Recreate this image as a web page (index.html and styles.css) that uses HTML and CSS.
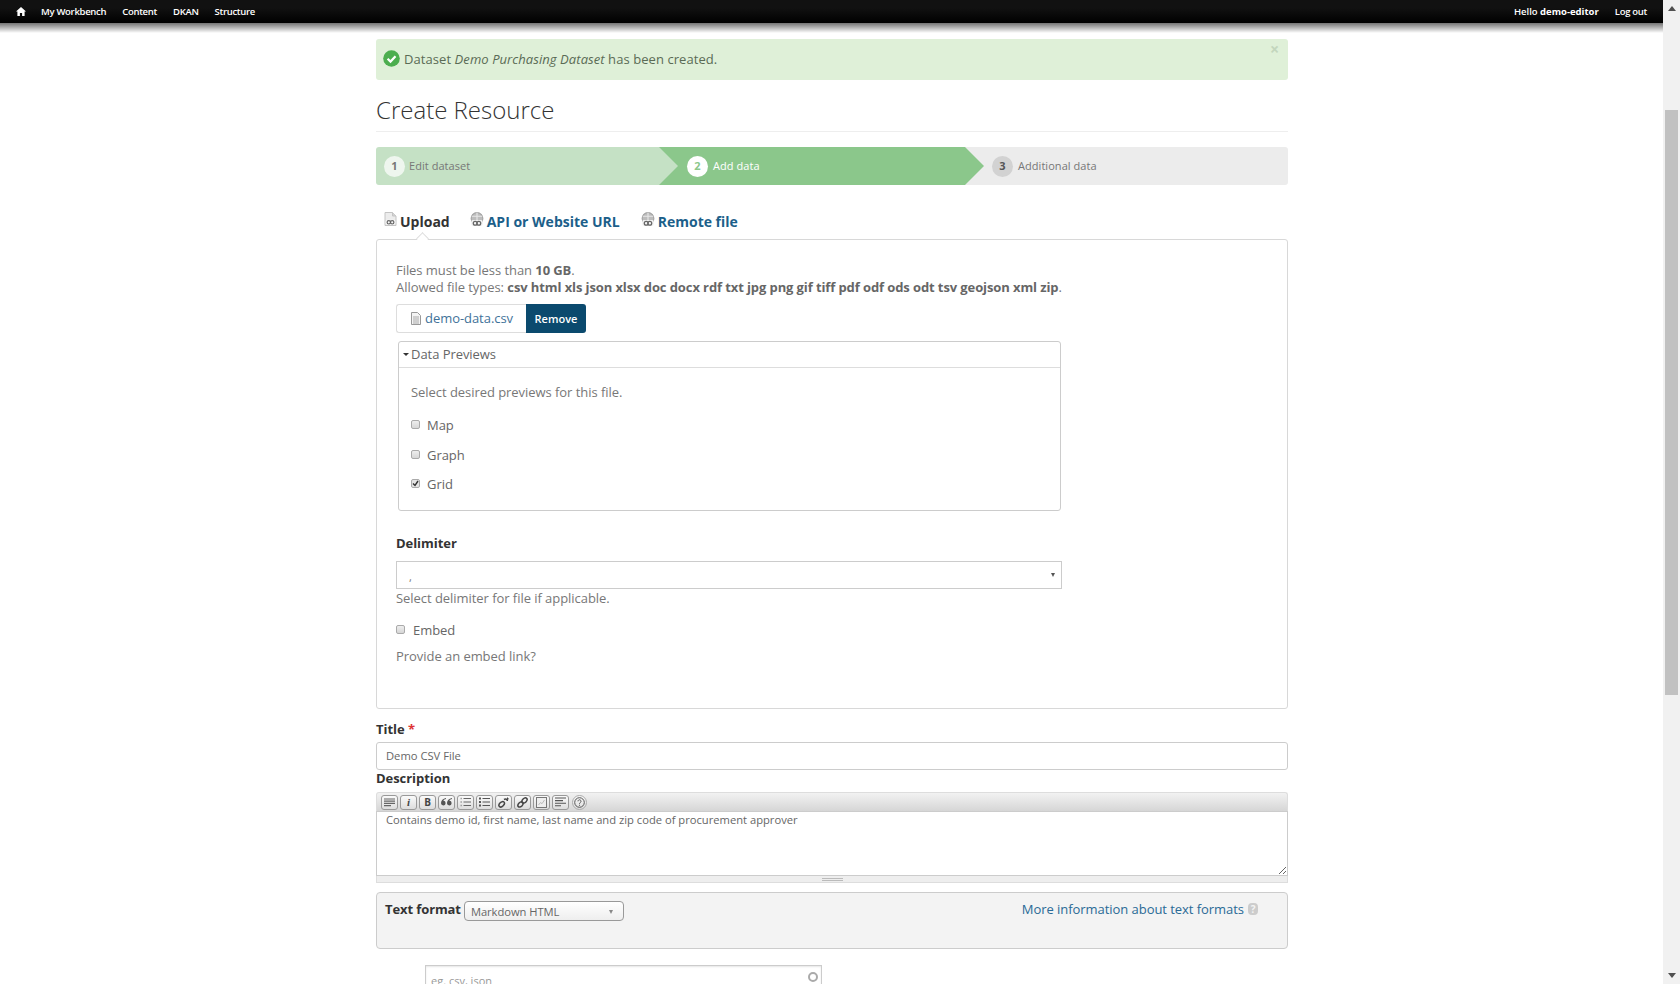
FILE: index.html
```html
<!DOCTYPE html>
<html lang="en">
<head>
    <meta charset="UTF-8">
    <title>Create Resource | DKAN</title>
    <link rel="stylesheet" href="styles.css">
</head>
<body>
<div class="window">
    <div class="viewport">
        <nav class="topbar">
            <a class="home" href="#"><svg width="10" height="9" viewBox="0 0 10 9"><path d="M5 0L0 4.6h1.4V9h2.5V5.9h2.2V9h2.5V4.6H10z" fill="#fff"/></svg></a>
            <a href="#">My Workbench</a>
            <a href="#">Content</a>
            <a href="#">DKAN</a>
            <a href="#">Structure</a>
            <span class="user">Hello <b>demo-editor</b></span>
            <a class="logout" href="#">Log out</a>
        </nav>

        <main class="page">
            <div class="alert">
                <svg class="alert-icon" width="17" height="17" viewBox="0 0 17 17"><circle cx="8.5" cy="8.5" r="8.3" fill="#4cae4f"/><path d="M4.6 8.8l2.9 2.8 5-5.4" fill="none" stroke="#fff" stroke-width="2.2"/></svg>
                <span class="alert-text">Dataset <em>Demo Purchasing Dataset</em> has been created.</span>
                <span class="alert-close">×</span>
            </div>

            <h1 class="title">Create Resource</h1>

            <ol class="steps">
                <li class="step step-done"><span class="num">1</span>Edit dataset</li>
                <li class="step step-active"><span class="num">2</span>Add data</li>
                <li class="step step-todo"><span class="num">3</span>Additional data</li>
            </ol>

            <div class="tabs">
                <a class="tab tab-current" href="#">
                    <svg width="13" height="14" viewBox="0 0 13 14"><path d="M1 .5h7.5L12 4v9.5H1z" fill="#ececec" stroke="#c4c4c4"/><path d="M8.5.5V4H12" fill="#d4d4d4" stroke="#c4c4c4"/><rect x="1.5" y="7.8" width="10" height="5" rx="2" fill="#f8f8f8"/><circle cx="4.8" cy="10.3" r="1.7" fill="none" stroke="#666" stroke-width="1.2"/><circle cx="8.2" cy="10.3" r="1.7" fill="none" stroke="#666" stroke-width="1.2"/></svg>
                    Upload
                </a>
                <a class="tab tab-api" href="#">
                    <svg width="16" height="15" viewBox="0 0 15 14"><circle cx="7.5" cy="6" r="5.5" fill="#bdbdbd" stroke="#a0a0a0"/><path d="M2.5 4h10M2.5 8h10M7.5 .5v11" stroke="#e8e8e8"/><rect x="2" y="7.8" width="11" height="5.4" rx="2.4" fill="#f4f4f4"/><circle cx="5.8" cy="10.5" r="1.8" fill="none" stroke="#666" stroke-width="1.2"/><circle cx="9.2" cy="10.5" r="1.8" fill="none" stroke="#666" stroke-width="1.2"/></svg>
                    API or Website URL
                </a>
                <a class="tab tab-remote" href="#">
                    <svg width="16" height="15" viewBox="0 0 15 14"><circle cx="7.5" cy="6" r="5.5" fill="#bdbdbd" stroke="#a0a0a0"/><path d="M2.5 4h10M2.5 8h10M7.5 .5v11" stroke="#e8e8e8"/><rect x="2" y="7.8" width="11" height="5.4" rx="2.4" fill="#f4f4f4"/><circle cx="5.8" cy="10.5" r="1.8" fill="none" stroke="#666" stroke-width="1.2"/><circle cx="9.2" cy="10.5" r="1.8" fill="none" stroke="#666" stroke-width="1.2"/></svg>
                    Remote file
                </a>
            </div>

            <section class="panel">
                <p class="help help-files">Files must be less than <strong>10 GB</strong>.<br>Allowed file types: <strong>csv html xls json xlsx doc docx rdf txt jpg png gif tiff pdf odf ods odt tsv geojson xml zip</strong>.</p>

                <div class="file-row">
                    <span class="file-name">
                        <svg width="10" height="13" viewBox="0 0 10 13"><path d="M.5.5h6l3 3v9h-9z" fill="#f4f4f4" stroke="#999"/><path d="M2 5h6M2 7h6M2 9h6M2 11h6" stroke="#aaa"/></svg>
                        <a href="#">demo-data.csv</a>
                    </span>
                    <button class="remove" type="button">Remove</button>
                </div>

                <fieldset class="previews">
                    <div class="previews-head"><span class="caret"></span>Data Previews</div>
                    <div class="previews-body">
                        <p class="previews-note">Select desired previews for this file.</p>
                        <label class="check check-map"><input type="checkbox">Map</label>
                        <label class="check check-graph"><input type="checkbox">Graph</label>
                        <label class="check check-grid"><input type="checkbox" checked>Grid</label>
                    </div>
                </fieldset>

                <div class="field-label delimiter-label">Delimiter</div>
                <div class="delimiter">
                    <span class="delimiter-value">,</span>
                    <span class="delimiter-caret"></span>
                </div>
                <p class="help delimiter-help">Select delimiter for file if applicable.</p>
                <label class="check check-embed"><input type="checkbox">Embed</label>
                <p class="help embed-help">Provide an embed link?</p>
            </section>

            <label class="field-label title-label" for="res-title">Title <span class="req">*</span></label>
            <input class="text-input" id="res-title" type="text" value="Demo CSV File">

            <label class="field-label desc-label" for="res-desc">Description</label>
            <div class="editor">
                <div class="toolbar">
                    <button class="tool" type="button"><svg width="11" height="9" viewBox="0 0 11 9"><path d="M0 1h11M0 3.2h11M0 5.4h11M0 7.6h7" stroke="#666" stroke-width="1.2"/></svg></button>
                    <button class="tool tool-i" type="button">i</button>
                    <button class="tool tool-b" type="button">B</button>
                    <button class="tool" type="button"><svg width="11" height="8" viewBox="0 0 11 8"><path d="M5 0C2 .5 0 2.5 0 5a2.3 2.3 0 1 0 2.4-2.2C2.8 1.8 3.8 1.2 5 1zM11 0C8 .5 6 2.5 6 5a2.3 2.3 0 1 0 2.4-2.2C8.8 1.8 9.8 1.2 11 1z" fill="#555"/></svg></button>
                    <button class="tool" type="button"><svg width="11" height="10" viewBox="0 0 11 10"><path d="M3.5 1.5H11M3.5 5H11M3.5 8.5H11" stroke="#666" stroke-width="1.2"/><path d="M.5 .8h1.400v1.400H.5zM.5 4.300h1.400v1.400H.5zM.5 7.800h1.400v1.400H.5z" fill="#999"/></svg></button>
                    <button class="tool" type="button"><svg width="11" height="10" viewBox="0 0 11 10"><path d="M3.5 1.5H11M3.5 5H11M3.5 8.5H11" stroke="#555" stroke-width="1.2"/><path d="M0 .5h2v2H0zM0 4h2v2H0zM0 7.5h2v2H0z" fill="#555"/></svg></button>
                    <button class="tool" type="button"><svg width="11" height="11" viewBox="0 0 11 11"><g fill="none" stroke="#444" stroke-width="1.5"><ellipse cx="3.7" cy="7.3" rx="3.2" ry="2.1" transform="rotate(-45 3.7 7.3)"/><path d="M6 2.5a2.2 3 45 0 1 3.4 1.5"/></g><path d="M9 0l2 2-2 1z" fill="#444"/></svg></button>
                    <button class="tool" type="button"><svg width="11" height="11" viewBox="0 0 11 11"><g fill="none" stroke="#444" stroke-width="1.5"><ellipse cx="3.5" cy="7.5" rx="3" ry="2" transform="rotate(-45 3.5 7.5)"/><ellipse cx="7.5" cy="3.5" rx="3" ry="2" transform="rotate(-45 7.5 3.5)"/></g></svg></button>
                    <button class="tool" type="button"><svg width="11" height="11" viewBox="0 0 11 11"><rect x=".5" y=".5" width="10" height="10" fill="#eee" stroke="#777"/><path d="M2.5 8l2-2.5 1.5 1.2L8.500 3" fill="none" stroke="#bbb"/></svg></button>
                    <button class="tool" type="button"><svg width="11" height="10" viewBox="0 0 11 10"><path d="M0 1h11M0 3.600h8M0 6.200h11M0 8.800h6" stroke="#555" stroke-width="1.1"/></svg></button>
                    <button class="tool tool-help" type="button"><svg width="11" height="11" viewBox="0 0 11 11"><circle cx="5.5" cy="5.5" r="4.8" fill="none" stroke="#555"/><path d="M4 4.3a1.5 1.5 0 1 1 2.4 1.2c-.6.4-.9.7-.9 1.3" fill="none" stroke="#555"/><path d="M5 7.7h1v1H5z" fill="#555"/></svg></button>
                </div>
                <textarea class="editor-text" id="res-desc">Contains demo id, first name, last name and zip code of procurement approver</textarea>
                <div class="grip"><span></span></div>
            </div>

            <div class="format-box">
                <span class="field-label format-label">Text format</span>
                <div class="format-select">Markdown HTML<span class="format-caret"></span></div>
                <a class="format-link" href="#">More information about text formats</a>
                <span class="format-q">?</span>
            </div>

            <div class="autocomplete">
                <input class="auto-input" type="text" placeholder="eg. csv, json">
                <span class="throbber"></span>
            </div>
        </main>
    </div>

    <div class="scrollbar">
        <span class="arrow-up"></span>
        <span class="thumb"></span>
        <span class="arrow-down"></span>
    </div>
</div>
</body>
</html>
```

FILE: styles.css
```css
html, body {
    height: 100%;
    margin: 0;
    overflow: hidden;
}
body {
    font-family: "Open Sans", "Noto Sans", sans-serif;
    font-size: 13px;
    line-height: 16px;
    letter-spacing: -0.05px;
    color: #777;
    background-color: #fff;
}
a {
    text-decoration: none;
}
p {
    margin: 0;
}
.window {
    display: flex;
    height: 100vh;
}
.viewport {
    flex: 1;
    min-width: 0;
    overflow: hidden;
}

/* top bar */
.topbar {
    display: flex;
    align-items: center;
    position: relative;
    height: 23px;
    padding: 0 16px;
    background: linear-gradient(#111 0, #111 8px, #000 100%);
    font-size: 9.5px;
    font-weight: 600;
    letter-spacing: -0.3px;
    color: #fff;
}
.topbar::after {
    content: "";
    position: absolute;
    top: 100%;
    left: 0;
    right: 0;
    height: 10px;
    background: linear-gradient(rgba(0, 0, 0, 0.55), rgba(0, 0, 0, 0));
}
.topbar a {
    color: #fff;
    margin-right: 16px;
}
.topbar .home {
    display: flex;
    margin-right: 15px;
}
.user {
    margin-left: auto;
    margin-right: 16px;
    letter-spacing: 0;
}
.user b {
    font-weight: 700;
}
.topbar .logout {
    margin-right: 0;
}

/* main column */
.page {
    width: 912px;
    margin: 0 auto;
    padding-left: 1px;
}
.alert {
    display: flex;
    align-items: center;
    gap: 4px;
    position: relative;
    height: 41px;
    margin-top: 16px;
    padding: 0 0 2px 7px;
    border-radius: 3px;
    background-color: #dff0d8;
    color: #5a6b55;
    box-sizing: border-box;
}
.alert-text {
    letter-spacing: 0.07px;
}
.alert-icon {
    flex: none;
}
.alert-close {
    position: absolute;
    top: 2px;
    right: 9px;
    font-size: 16px;
    line-height: 16px;
    color: #c3d6bd;
    font-weight: 700;
}
.title {
    height: 51px;
    margin: 0;
    border-bottom: 1px solid #eee;
    font-size: 24px;
    font-weight: 300;
    line-height: 60px;
    letter-spacing: 0;
    color: #333;
}

/* wizard steps */
.steps {
    display: grid;
    grid-template-columns: 283px 306px 1fr;
    height: 38px;
    margin: 15px 0 0;
    padding: 0;
    list-style: none;
    border-radius: 3px;
    overflow: hidden;
    font-size: 11px;
    letter-spacing: 0.05px;
}
.step {
    display: flex;
    align-items: center;
    position: relative;
    gap: 5px;
    padding-left: 28px;
    color: #777;
}
.step::after {
    content: "";
    position: absolute;
    top: 0;
    right: -19px;
    z-index: 1;
    border-top: 19px solid transparent;
    border-bottom: 19px solid transparent;
    border-left: 19px solid transparent;
}
.num {
    display: flex;
    align-items: center;
    justify-content: center;
    width: 21px;
    height: 21px;
    border-radius: 50%;
    font-weight: 700;
}
.step-done {
    gap: 4px;
    padding-left: 8px;
    background-color: #c5e1c5;
}
.step-done::after {
    border-left-color: #c5e1c5;
}
.step-done .num {
    background-color: #eef6ee;
}
.step-active {
    background-color: #8bc78b;
    color: #fff;
}
.step-active::after {
    border-left-color: #8bc78b;
}
.step-active .num {
    background-color: #fff;
    color: #8bc78b;
}
.step-todo {
    padding-left: 27px;
    background-color: #ececec;
}
.step-todo::after {
    display: none;
}
.step-todo .num {
    background-color: #d2d2d2;
    color: #555;
}

/* tabs */
.tabs {
    display: flex;
    height: 54px;
    padding-left: 8px;
    align-items: flex-end;
}
.tab {
    display: flex;
    align-items: flex-start;
    gap: 2px;
    height: 27px;
    position: relative;
    font-size: 14px;
    font-weight: 700;
    line-height: 20px;
    letter-spacing: 0;
    color: #1c5f8a;
}
.tab svg {
    flex: none;
}
.tab-current {
    gap: 3px;
    color: #333;
}
.tab-current::after {
    content: "";
    position: absolute;
    left: 34px;
    bottom: -4px;
    width: 8px;
    height: 8px;
    background-color: #fff;
    border-left: 1px solid #ddd;
    border-top: 1px solid #ddd;
    transform: rotate(45deg);
    z-index: 1;
}
.tab-api {
    margin-left: 19px;
}
.tab-remote {
    margin-left: 20px;
}

/* resource panel */
.panel {
    height: 470px;
    padding: 22px 19px 0;
    border: 1px solid #d8d8d8;
    border-radius: 3px;
    box-sizing: border-box;
}
.help-files {
    line-height: 17px;
}
.help strong {
    color: #666;
    letter-spacing: -0.1px;
}
.file-row {
    display: flex;
    height: 29px;
    margin-top: 8px;
}
.file-name {
    display: flex;
    align-items: center;
    gap: 4px;
    width: 130px;
    padding: 0 0 1px 14px;
    border: 1px solid #ddd;
    border-right: 0;
    border-radius: 3px 0 0 3px;
    box-sizing: border-box;
}
.file-name a {
    color: #3f7299;
}
.remove {
    width: 60px;
    padding: 0;
    border: 0;
    border-radius: 0 3px 3px 0;
    background-color: #0b4a6e;
    color: #fff;
    font-family: inherit;
    font-size: 11px;
    font-weight: 600;
}
.previews {
    width: 663px;
    height: 170px;
    margin: 8px 0 0 2px;
    padding: 0;
    border: 1px solid #ccc;
    border-radius: 3px;
    box-sizing: border-box;
}
.previews-head {
    display: flex;
    align-items: center;
    gap: 2px;
    height: 23px;
    padding: 0 0 2px 4px;
    border-bottom: 1px solid #ddd;
    color: #666;
}
.caret {
    width: 0;
    height: 0;
    margin-top: 2px;
    border-top: 3px solid #333;
    border-left: 3px solid transparent;
    border-right: 3px solid transparent;
}
.previews-body {
    padding: 16px 12px 0;
}
.check {
    display: flex;
    align-items: center;
    gap: 7px;
    color: #666;
}
.check input {
    appearance: none;
    width: 7px;
    height: 7px;
    margin: 0 0 1px;
    border: 1px solid #aaa;
    border-radius: 2px;
    background: linear-gradient(#eee, #d6d6d6);
    box-sizing: content-box;
}
.check input:checked {
    background: url("data:image/svg+xml,%3Csvg xmlns='http://www.w3.org/2000/svg' width='7' height='7'%3E%3Cpath d='M1 3.5l2 2 3-4.5' fill='none' stroke='%23333' stroke-width='1.4'/%3E%3C/svg%3E") no-repeat center, #e4e4e4;
}
.check-map {
    margin-top: 17px;
}
.check-graph {
    margin-top: 14px;
}
.check-grid {
    margin-top: 13px;
}
.field-label {
    display: block;
    font-weight: 700;
    color: #333;
}
.delimiter-label {
    margin-top: 24px;
}
.delimiter {
    display: flex;
    align-items: center;
    justify-content: space-between;
    width: 666px;
    height: 28px;
    margin-top: 10px;
    padding: 0 6px 0 12px;
    border: 1px solid #ccc;
    box-sizing: border-box;
}
.delimiter-value {
    padding-top: 3px;
    font-size: 11px;
}
.delimiter-caret {
    border-top: 4px solid #555;
    border-left: 2.5px solid transparent;
    border-right: 2.5px solid transparent;
}
.delimiter-help {
    margin-top: 1px;
}
.check-embed {
    gap: 8px;
    margin-top: 16px;
}
.embed-help {
    margin-top: 10px;
}

/* title and description */
.title-label {
    margin-top: 12px;
}
.req {
    color: #d33;
}
.text-input {
    display: block;
    width: 100%;
    height: 28px;
    margin: 5px 0 0;
    padding: 0 9px 2px;
    border: 1px solid #ccc;
    border-radius: 3px;
    box-sizing: border-box;
    font-family: inherit;
    font-size: 11.2px;
    color: #666;
}
.desc-label {
    margin-top: 0;
}
.editor {
    margin-top: 6px;
}
.toolbar {
    display: flex;
    align-items: center;
    gap: 2px;
    height: 19px;
    padding-left: 4px;
    border: 1px solid #ddd;
    border-bottom: 0;
    border-radius: 3px 3px 0 0;
    background: linear-gradient(#f2f2f2, #d6d6d6);
    box-sizing: border-box;
}
.tool {
    display: flex;
    align-items: center;
    justify-content: center;
    width: 17px;
    height: 15px;
    padding: 0;
    border: 1px solid #999;
    border-radius: 3px;
    background: linear-gradient(#fafafa, #ddd);
    font-family: "Liberation Serif", serif;
    font-size: 11px;
    color: #444;
}
.tool-i {
    font-style: italic;
    font-weight: 700;
}
.tool-b {
    font-family: "Open Sans", sans-serif;
    font-weight: 700;
    font-size: 10px;
}
.tool-help {
    border-radius: 50%;
    width: 15px;
    margin-left: 1px;
    border-color: #aaa;
}
.editor-text {
    display: block;
    width: 100%;
    height: 65px;
    margin: 0;
    padding: 0 9px;
    border: 1px solid #ccc;
    box-sizing: border-box;
    font-family: inherit;
    font-size: 11.2px;
    line-height: 16px;
    color: #666;
    outline: 0;
}
.grip {
    display: flex;
    justify-content: center;
    height: 7px;
    border: 1px solid #ddd;
    border-top: 0;
    background-color: #eee;
    box-sizing: border-box;
}
.grip span {
    width: 21px;
    height: 3px;
    margin-top: 2px;
    border-top: 1px solid #bbb;
    border-bottom: 1px solid #bbb;
    box-sizing: border-box;
}

/* text format */
.format-box {
    display: flex;
    align-items: flex-start;
    height: 57px;
    margin-top: 9px;
    padding: 8px 29px 0 8px;
    border: 1px solid #ccc;
    border-radius: 4px;
    background-color: #f3f3f3;
    box-sizing: border-box;
}
.format-label {
    letter-spacing: -0.1px;
}
.format-select {
    display: flex;
    align-items: center;
    justify-content: space-between;
    width: 160px;
    height: 20px;
    margin-left: 3px;
    padding: 1px 10px 0 6px;
    border: 1px solid #999;
    border-radius: 4px;
    background: linear-gradient(#fff, #eee);
    box-sizing: border-box;
    font-size: 11.2px;
    color: #666;
}
.format-caret {
    border-top: 4px solid #888;
    border-left: 2.5px solid transparent;
    border-right: 2.5px solid transparent;
}
.format-link {
    margin-left: auto;
    color: #2a6a96;
}
.format-q {
    display: flex;
    align-items: center;
    justify-content: center;
    width: 10px;
    height: 12px;
    margin: 2px 0 0 4px;
    border-radius: 4px;
    background-color: #ccc;
    color: #f3f3f3;
    font-size: 10px;
    font-weight: 700;
}

/* autocomplete */
.autocomplete {
    position: relative;
    width: 397px;
    margin: 16px 0 0 49px;
}
.auto-input {
    display: block;
    width: 100%;
    height: 30px;
    margin: 0;
    padding: 0 5px;
    border: 1px solid #ccc;
    box-shadow: inset 0 1px 2px rgba(0, 0, 0, 0.1);
    box-sizing: border-box;
    font-family: inherit;
    font-size: 11px;
}
.auto-input::placeholder {
    color: #999;
}
.throbber {
    position: absolute;
    top: 7px;
    right: 4px;
    width: 6px;
    height: 6px;
    border: 2px solid #aaa;
    border-radius: 50%;
}

/* page scrollbar */
.scrollbar {
    display: flex;
    flex-direction: column;
    align-items: center;
    flex: none;
    width: 17px;
    background-color: #f1f1f1;
}
.arrow-up {
    margin-top: 6px;
    border-bottom: 5px solid #505050;
    border-left: 4px solid transparent;
    border-right: 4px solid transparent;
}
.thumb {
    width: 13px;
    height: 585px;
    margin-top: 99px;
    background-color: #c1c1c1;
}
.arrow-down {
    margin-top: auto;
    margin-bottom: 6px;
    border-top: 5px solid #505050;
    border-left: 4px solid transparent;
    border-right: 4px solid transparent;
}
```
